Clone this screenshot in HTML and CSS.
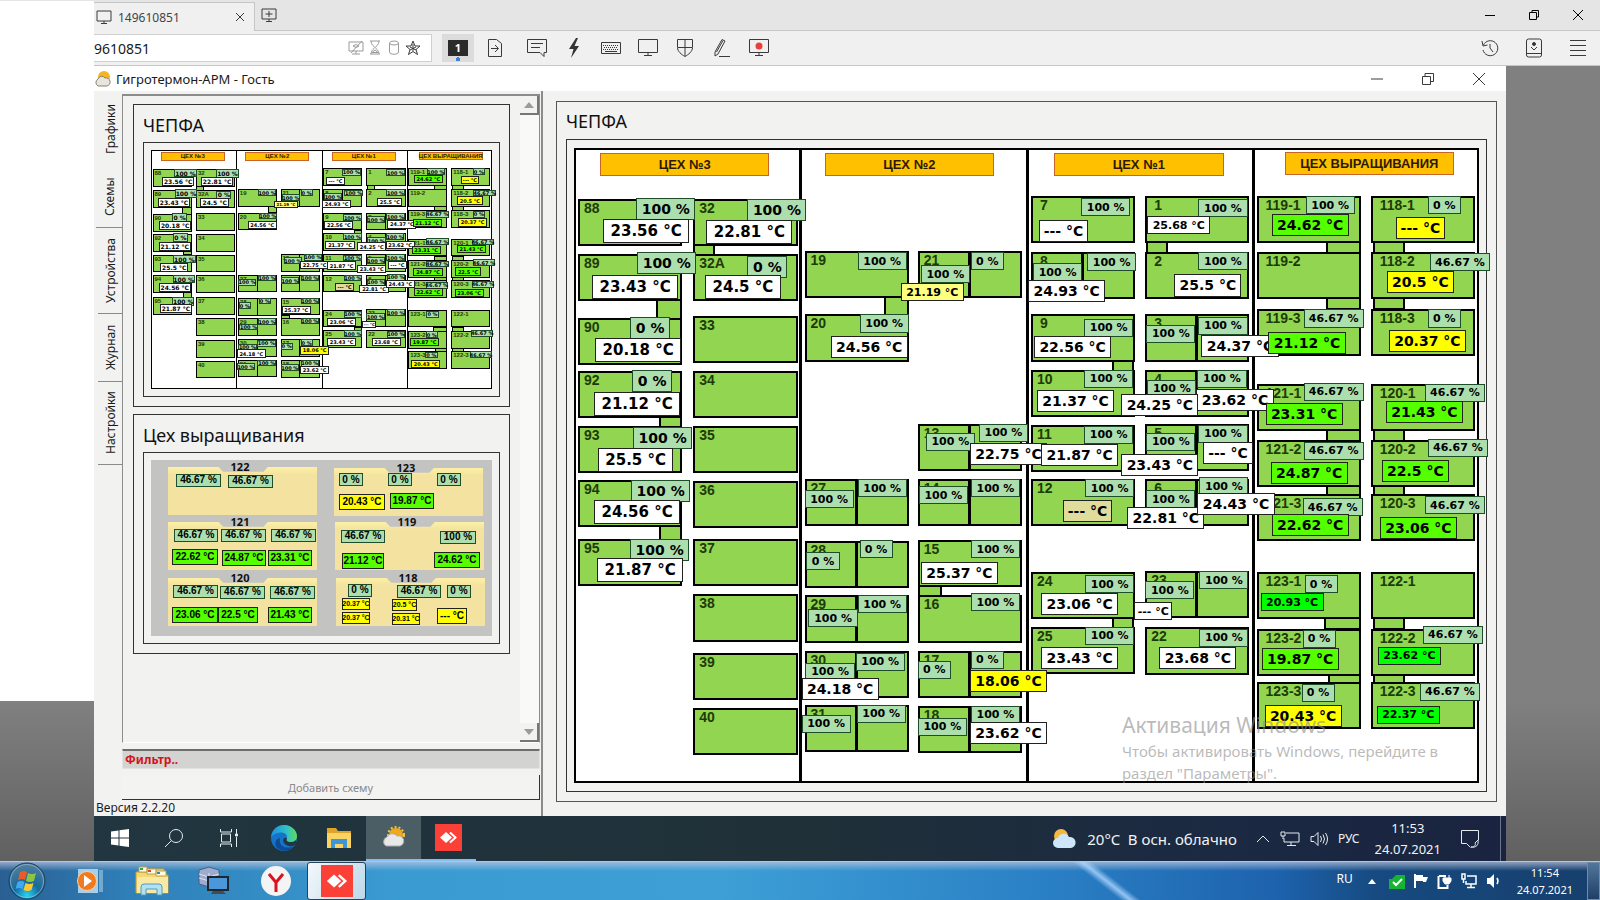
FILE: index.html
```html
<!DOCTYPE html>
<html lang="ru">
<head>
<meta charset="utf-8">
<title>149610851</title>
<link rel="stylesheet" href="styles.css">
</head>
<body>
<header class="tabstrip">
  <div class="session-tab">
    <svg class="ico" width="18" height="16" viewBox="0 0 18 16"><path d="M2 2h14v10H2zM9 12v2M6 14.500h6"/></svg>
    <span>149610851</span>
    <button class="plain" aria-label="Закрыть вкладку"><svg class="ico" width="10" height="10" viewBox="0 0 10 10"><path d="M1 1l8 8M9 1l-8 8"/></svg></button>
  </div>
  <button class="plain new-tab" aria-label="Новая вкладка"><svg class="ico" width="18" height="16" viewBox="0 0 18 16"><path d="M2 2h14v10H2zM9 12v2M6 14.500h6M9 4v6M5.500 7h7"/></svg></button>
  <div class="win-buttons">
    <button class="plain" aria-label="Свернуть"><svg class="ico dark" width="12" height="12" viewBox="0 0 12 12"><path d="M1 6.500h10"/></svg></button>
    <button class="plain" aria-label="Развернуть"><svg class="ico dark" width="12" height="12" viewBox="0 0 12 12"><path d="M1.500 3.500h7v7h-7zM4 3.500v-2h6.500v6.500h-2"/></svg></button>
    <button class="plain" aria-label="Закрыть"><svg class="ico dark" width="12" height="12" viewBox="0 0 12 12"><path d="M1 1l10 10M11 1L1 11"/></svg></button>
  </div>
</header>

<div class="toolbar">
  <div class="address">
    <input type="text" value="9610851" aria-label="Адрес">
    <svg class="ico pale" width="16" height="16" viewBox="0 0 16 16"><path d="M1 2h14v9H1zM8 11v3M4 14h8M3 13L14 1M5 6q3-3 6 0q-3 3-6 0"/></svg>
    <svg class="ico pale" width="16" height="18" viewBox="0 0 16 18"><path d="M3 2h10M3 15h10M4 2c0 4 3 5 4 6.500C9 7 12 6 12 2M4 15c0-4 3-5 4-6.500 1 1.500 4 2.500 4 6.500"/><path d="M5 13.500h6L8 11z"/></svg>
    <svg class="ico pale" width="16" height="18" viewBox="0 0 16 18"><ellipse cx="8" cy="4" rx="4.500" ry="2"/><path d="M3.500 4v9c0 3 9 3 9 0V4"/></svg>
    <svg class="ico" width="16" height="16" viewBox="0 0 16 16"><path d="M8 1l2 5h5l-4 3.500 1.500 5L8 11.500l-4.500 3 1.500-5L1 6h5zM8 4v7M5 7l6 3M11 7l-6 3"/></svg>
  </div>
  <button class="monitor-one" aria-label="Монитор 1"><span>1</span></button>
  <div class="tools">
    <button class="plain send" aria-label="Передать"><svg class="ico" width="20" height="20" viewBox="0 0 20 20"><path d="M3.500 1.500h8l5 4v13h-13zM6 10.500h7M10 7l3.500 3.500L10 14"/></svg></button>
    <button class="plain" aria-label="Чат"><svg class="ico" width="20" height="20" viewBox="0 0 20 20"><path d="M.500 1.500h19v13H17v4l-4-4H.500zM4 5.500h12M4 9.500h9"/></svg></button>
    <button class="plain" aria-label="Действия"><svg class="ico" width="20" height="20" viewBox="0 0 20 20"><path class="solid" stroke="none" d="M12 0L5 11h4.500L7 20l8-12h-4.500L14 0z"/></svg></button>
    <button class="plain" aria-label="Клавиатура"><svg class="ico" width="20" height="20" viewBox="0 0 20 20"><path d="M.500 4.500h19v11H.500zM4 13.500h12"/><path stroke-dasharray="1 1" d="M2 7.500h16M3 9.500h14M2 11.500h16"/></svg></button>
    <button class="plain" aria-label="Экран"><svg class="ico" width="20" height="20" viewBox="0 0 20 20"><path d="M.500 1.500h19v13H.500zM10 14.500v3M6 17.500h8"/></svg></button>
    <button class="plain" aria-label="Права"><svg class="ico" width="20" height="20" viewBox="0 0 20 20"><path d="M2.500 1.500h15v8c0 4-4 7-7.500 9-3.500-2-7.500-5-7.500-9zM10 2v16M3 9.500h14"/></svg></button>
    <button class="plain" aria-label="Рисование"><svg class="ico" width="20" height="20" viewBox="0 0 20 20"><path d="M3 14L10 1.500l3 1.500L6 16 3 18zM4.500 14L11 2.500M7 18.500h11"/></svg></button>
    <button class="plain" aria-label="Запись"><svg class="ico" width="20" height="20" viewBox="0 0 20 20"><path d="M.500 1.500h19v13H.500zM10 14.500v3M6 17.500h8"/><circle class="rec" cx="10" cy="8" r="3.500"/></svg></button>
  </div>
  <div class="tools-right">
    <button class="plain" aria-label="История"><svg class="ico" width="18" height="18" viewBox="0 0 18 18"><path d="M2.500 6A7.500 7.500 0 1 1 2 11M1 2l1 5 4.500-1M9 5v4l3 4"/></svg></button>
    <button class="plain" aria-label="Адресная книга"><svg class="ico" width="18" height="20" viewBox="0 0 18 20"><rect x="1.500" y="1" width="15" height="18" rx="2"/><path d="M2 15.500h14M6 9l3 3 3-3"/><circle class="solid" cx="9" cy="6" r="1.500"/></svg></button>
    <button class="plain" aria-label="Меню"><svg class="ico" width="18" height="18" viewBox="0 0 18 18"><path d="M1 1.500h16M1 6.500h16M1 11.500h16M1 16.500h16"/></svg></button>
  </div>
</div>

<main class="viewport">
  <section class="remote">
    <div class="app-title">
      <svg width="18" height="18" viewBox="0 0 18 18"><circle cx="10" cy="7" r="6" fill="#f5b51f"/><path d="M4 16a4 4 0 0 1 0-7 4 4 0 0 1 7-1 4 4 0 0 1 2 8z" fill="#e6e6e0" stroke="#8c8270"/></svg>
      <h1>Гигротермон-АРМ - Гость</h1>
      <div class="win-buttons app-buttons">
        <button class="plain" aria-label="Свернуть окно"><svg class="ico" width="12" height="12" viewBox="0 0 12 12"><path d="M0 6h12"/></svg></button>
        <button class="plain" aria-label="Восстановить окно"><svg class="ico" width="12" height="12" viewBox="0 0 12 12"><path d="M.500 3.500h8v8h-8zM3 3.500v-3h8.500v8h-3"/></svg></button>
        <button class="plain" aria-label="Закрыть окно"><svg class="ico" width="12" height="12" viewBox="0 0 12 12"><path d="M0 0l12 12M12 0L0 12"/></svg></button>
      </div>
    </div>
    <div class="app-body">
      <aside class="left">
        <div class="left-main">
          <nav class="side-tabs">
            <button class="t-graphs">Графики</button>
            <button class="t-schemes active">Схемы</button>
            <button class="t-devices">Устройства</button>
            <button class="t-journal">Журнал</button>
            <button class="t-settings">Настройки</button>
          </nav>
          <div class="left-col">
            <div class="scroll-area">
              <div class="cards">
                <article class="card">
                  <h2>ЧЕПФА</h2>
                  <div class="frame"><div class="board mini" id="board-mini"></div></div>
                </article>
                <article class="card">
                  <h2>Цех выращивания</h2>
                  <div class="frame"><div class="board folders" id="board-folders"></div></div>
                </article>
              </div>
              <div class="scrollbar">
                <button aria-label="Вверх"><svg width="10" height="6" viewBox="0 0 10 6"><path d="M0 6l5-6 5 6z" fill="#9b9b9b"/></svg></button>
                <button aria-label="Вниз"><svg width="10" height="6" viewBox="0 0 10 6"><path d="M0 0l5 6 5-6z" fill="#9b9b9b"/></svg></button>
              </div>
            </div>
            <input class="filter" type="text" placeholder="Фильтр.." aria-label="Фильтр">
            <button class="add" disabled>Добавить схему</button>
          </div>
        </div>
        <div class="version">Версия 2.2.20</div>
      </aside>
      <section class="scheme">
        <h2>ЧЕПФА</h2>
        <div class="frame"><div class="board" id="board-main"></div></div>
      </section>
      <div class="watermark"><p class="wm-title">Активация Windows</p><p>Чтобы активировать Windows, перейдите в раздел "Параметры".</p></div>
    </div>
    <footer class="bar10">
      <button aria-label="Пуск"><svg width="20" height="20" viewBox="0 0 20 20" fill="#fff"><path d="M1 3.500l7.500-1V9.500H1zM9.500 2.300L19 1v8.500H9.500zM1 10.500h7.500v7L1 16.500zM9.500 10.500H19V19l-9.500-1.300z"/></svg></button>
      <button aria-label="Поиск"><svg class="ico light" width="20" height="20" viewBox="0 0 20 20"><circle cx="12" cy="8" r="6.500"/><path d="M7.500 12.500L1 19"/></svg></button>
      <button aria-label="Представление задач"><svg class="ico light" width="20" height="20" viewBox="0 0 20 20"><path d="M1.500 1v3h11V1M1.500 19v-3h11v3M2.500 6h9v8h-9zM17.500 1v5M17.500 9v10"/><path class="solid" d="M16.500 6h2v2h-2z"/></svg></button>
      <button aria-label="Edge"><svg width="28" height="28" viewBox="0 0 28 28"><defs><linearGradient id="edge-a" x2="1" y2="0"><stop stop-color="#1f8fe0"/><stop offset=".6" stop-color="#2fc0c8"/><stop offset="1" stop-color="#5fdc5a"/></linearGradient></defs><circle cx="14" cy="14" r="13" fill="#1673c8"/><path d="M1 13C2 5 8 1 14 1c8 0 13 6 13 11 0 4-3 6-6 6-5 0-5-2-4-4 1-6-9-8-16-1z" fill="url(#edge-a)"/><path d="M10 14c-2 8 6 12 14 8-4 6-12 6-17 2-3-4-2-9 3-10z" fill="#0d4c94"/><path d="M17 14c-1 2-1 4 4 4 2 0 4-.5 5-2l1 3-4 3c-6 1-12-3-9-8z" fill="#213640"/></svg></button>
      <button aria-label="Проводник"><svg width="26" height="22" viewBox="0 0 26 22"><path d="M1 1h9l2 3h13v17H1z" fill="#e0a32a"/><path d="M1 6h24v15H1z" fill="#fbd364"/><path d="M5 21v-9h16v9h-4v-4H9v4z" fill="#3d97d6"/></svg></button>
      <button class="current" aria-label="Гигротермон"><svg width="26" height="26" viewBox="0 0 26 26"><circle cx="15" cy="10" r="7" fill="#f0a91e"/><circle cx="15" cy="10" r="8" fill="none" stroke="#f7c63d" stroke-dasharray="2 2" stroke-width="2"/><path d="M5 21a5 5 0 0 1 1-9 6 6 0 0 1 10-1 5 5 0 0 1 3 10z" fill="#e8e8e8" stroke="#aaa"/></svg></button>
      <button class="running" aria-label="AnyDesk"><svg width="27" height="27" viewBox="0 0 27 27"><path fill="#fb4137" d="M0 0h27v27H0z"/><path fill="#fff" d="M5 13.500L11 8l6 5.500-6 5.500z"/><path fill="none" stroke="#fff" stroke-width="2" d="M15 8.500l5.500 5-5.500 5"/></svg></button>
      <div class="tray10">
        <svg width="24" height="22" viewBox="0 0 24 22"><circle cx="8" cy="8" r="7" fill="#f6b73c"/><path d="M5 20a5 5 0 0 1 0-10 6 6 0 0 1 11-1 5.500 5.500 0 0 1 2 11z" fill="#cfe6fa"/></svg>
        <span class="weather">20°C&ensp;В осн. облачно</span>
        <svg class="ico light" width="14" height="10" viewBox="0 0 14 10"><path d="M1 8l6-6 6 6"/></svg>
        <svg class="ico light" width="20" height="18" viewBox="0 0 20 18"><path d="M6 3h13v9H4V8M11 12v3M7 15.500h9M1 2h4v4H1zM3 6v3"/></svg>
        <svg class="ico light" width="18" height="16" viewBox="0 0 18 16"><path d="M1 5.500h3l4-4v13l-4-4H1zM10.500 5q2 3 0 6M13 3.500q3 4.500 0 9M15.500 2q4 6 0 12"/></svg>
        <span class="lang">РУС</span>
        <time class="clock">11:53<br>24.07.2021</time>
        <svg class="ico light" width="20" height="20" viewBox="0 0 20 20"><path d="M18.500 11V1.500h-17v13h5l4 4M18 11c1 5-2 8-7 7 4 0 5-2 4-4z"/></svg>
        <i class="peek10"></i>
      </div>
    </footer>
  </section>
</main>

<footer class="bar7">
  <button class="orb" aria-label="Пуск"><svg width="38" height="38" viewBox="0 0 38 38"><defs><radialGradient id="orb-g" cx=".5" cy=".9" r=".9"><stop stop-color="#27d4f5"/><stop offset=".4" stop-color="#176a9c"/><stop offset="1" stop-color="#587f9c"/></radialGradient></defs><circle cx="19" cy="19" r="18" fill="url(#orb-g)" stroke="#16405f"/><circle cx="19" cy="19" r="16.500" fill="none" stroke="#9cc6dd" opacity=".6"/><path d="M12 10q4-2 7 0l-2 8q-3-2-7 0z" fill="#ee5a24"/><path d="M20 11q4 2 8 0l-2 8q-4 2-8 0z" fill="#8cc63f"/><path d="M9.500 20q4-2 7 0l-2 7q-3-2-7 0z" fill="#3fa9f5"/><path d="M17.500 21q4 2 8 0l-2 7q-4 2-8 0z" fill="#fcc832"/></svg></button>
  <button aria-label="Медиаплеер"><svg width="28" height="26" viewBox="0 0 28 26"><path d="M2 1h20v24H2z" fill="#a7cfe8"/><path d="M24 2v22M26 2v22" stroke="#b9dbef"/><circle cx="11" cy="13" r="9.500" fill="#f1791f" stroke="#fbd2a0"/><path d="M8 7l8 6-8 6z" fill="#fff"/></svg></button>
  <button aria-label="Проводник Windows"><svg width="34" height="30" viewBox="0 0 34 30"><path d="M1 6h12l2-3h14v6h4v18H1z" fill="#f2d974" stroke="#c59f3c"/><path d="M4 1h8v5H4zM12 3h9v5h-9zM21 5h10v5H21z" fill="#fffbe2" stroke="#b9a24a"/><path d="M5 2h3v2H5z" fill="#2ea84a"/><path d="M13 4h3v2h-3z" fill="#e0442c"/><path d="M22 6h3v2h-3z" fill="#2f83cf"/><path d="M2 11h31v16H2z" fill="#f9e9a4"/><path d="M6 29v-8q0-3 3-3h15q3 0 3 3v8h-5v-6H11v6z" fill="#b3e0f2" stroke="#4e9cbe"/></svg></button>
  <button aria-label="Серверы"><svg width="32" height="30" viewBox="0 0 32 30"><path d="M1 4l10-3 10 3v14l-10 3-10-3z" fill="#9daccd" stroke="#4d5c85"/><path d="M1 8l10 3 10-3M1 12l10 3 10-3M11 7v14" stroke="#dce3f2" fill="none"/><path d="M9 10h22v15H9z" fill="#20262e"/><path d="M11 12h18v11H11z" fill="#4b97dc"/><path d="M15 25h10l3 3H13z" fill="#434a54"/></svg></button>
  <button aria-label="Яндекс"><svg width="30" height="30" viewBox="0 0 30 30"><circle cx="15" cy="15" r="15" fill="#f4f4f4"/><path d="M8 8l7 8.500L22 8M15 16v10" fill="none" stroke="#d8121f" stroke-width="3"/></svg></button>
  <button class="open7" aria-label="AnyDesk"><svg width="32" height="32" viewBox="0 0 27 27"><path fill="#fb4137" d="M0 0h27v27H0z"/><path fill="#fff" d="M5 13.500L11 8l6 5.500-6 5.500z"/><path fill="none" stroke="#fff" stroke-width="2" d="M15 8.500l5.500 5-5.500 5"/></svg></button>
  <div class="glow"></div>
  <div class="tray7">
    <span class="lang7">RU</span>
    <svg width="8" height="5" viewBox="0 0 8 5"><path fill="#fff" d="M0 5l4-5 4 5z"/></svg>
    <svg class="first7" width="16" height="16" viewBox="0 0 16 16"><path fill="#17b332" d="M0 6h3l4-4h9v14H0z"/><path d="M4 9l3 3 6-6" fill="none" stroke="#fff" stroke-width="2"/></svg>
    <svg width="16" height="16" viewBox="0 0 16 16"><path d="M2 1v14" stroke="#fff" stroke-width="2"/><path fill="#fff" d="M3 2h7v6H3zM10 4h5l-2 5h-3z"/></svg>
    <svg width="16" height="16" viewBox="0 0 16 16"><path d="M2 3h7M1.500 3v12h9v-3" fill="none" stroke="#fff" stroke-width="2"/><path d="M6 5h8v3l-2 3H8L6 8zM8 2v3M12 2v3" fill="#fff" stroke="#fff"/></svg>
    <svg width="16" height="16" viewBox="0 0 16 16"><path d="M6 3h9v8H5V8M10 11v3M6 14.500h8M1 1h3v5H1zM2.500 6v4" fill="none" stroke="#fff" stroke-width="1.500"/></svg>
    <svg width="16" height="16" viewBox="0 0 16 16"><path fill="#fff" d="M2 5h3l4-4v14l-4-4H2z"/><path d="M12 5q2 3 0 6" fill="none" stroke="#fff" stroke-width="1.500"/></svg>
    <time class="clock7">11:54<br>24.07.2021</time>
    <i class="peek7"></i>
  </div>
</footer>
<div class="blank"></div>
<script src="scheme.js"></script>
</body>
</html>
```
FILE: styles.css
```css
* { box-sizing: border-box; }
body { margin: 0; height: 100vh; display: flex; flex-direction: column; overflow: hidden; position: relative; background: #808080; font-family: "Noto Sans", sans-serif; font-size: 12px; color: #1a1a1a; }
h1, h2, p { margin: 0; font-weight: 400; }
button, input { font-family: inherit; font-size: inherit; color: inherit; }
.plain { border: 0; background: none; padding: 0; width: 20px; display: flex; align-items: center; justify-content: center; }
svg { flex: none; display: block; }
.ico { fill: none; stroke: #3a3a3a; stroke-width: 1; }
.ico .solid { fill: #333; }
.ico .rec { fill: #e8403c; stroke: none; }
.dark { stroke: #000; }
.pale { stroke: #9a9a9a; }
.light { stroke: #e6ebee; }
.light .solid { fill: #e6ebee; }
.blank { position: absolute; left: 0; top: 1px; width: 94px; height: 700px; background: #fff; }

.tabstrip { flex: none; height: 31px; padding-left: 94px; display: flex; background: #e5e5e5; border-bottom: 1px solid #c6c6c6; }
.session-tab { width: 161px; margin: 2px 0 -1px; padding: 0 4px 0 1px; display: flex; align-items: center; gap: 5px; background: #f0f0f0; border: solid #c6c6c6; border-width: 1px 1px 0 0; color: #444; }
.session-tab .plain { margin-left: auto; }
.new-tab { margin-left: 4px; }
.win-buttons { margin-left: auto; display: flex; gap: 24px; padding-right: 12px; }
.toolbar { flex: none; height: 35px; padding-left: 94px; display: flex; align-items: center; background: #f0f0f0; border-bottom: 1px solid #c6c6c6; }
.address { width: 338px; height: 28px; display: flex; align-items: center; gap: 3px; padding-right: 10px; background: #fff; border: solid #d0d0d0; border-width: 1px 1px 1px 0; }
.address input { flex: 1; min-width: 0; border: 0; padding: 0; background: none; font-size: 14px; outline: 0; }
.monitor-one { width: 32px; height: 28px; margin-left: 10px; border: 0; padding: 0; background: radial-gradient(circle at 50% 90%, #3b82d8 0 2px, #dcdcdc 2px); display: flex; justify-content: center; align-items: center; }
.monitor-one span { width: 20px; height: 16px; line-height: 16px; background: #2b2b2b; color: #fff; font-weight: 700; font-size: 11px; }
.tools { display: flex; gap: 17px; margin-left: 11px; }
.tools .send { margin-right: 5px; }
.tools-right { margin-left: auto; display: flex; gap: 24px; padding-right: 12px; }

.viewport { flex: 1; min-height: 0; padding: 0 94px; display: flex; background: linear-gradient(#808080 80%, #606060); }
.remote { flex: 1; min-width: 0; display: flex; flex-direction: column; background: #f2f2f1; }
.app-title { flex: none; height: 25px; display: flex; align-items: center; gap: 4px; background: #fff; }
.app-title h1 { font-size: 13px; line-height: 20px; }
.app-buttons { gap: 31px; padding-right: 17px; }
.app-body { flex: 1; min-height: 0; display: flex; position: relative; }
.left { width: 449px; display: flex; flex-direction: column; border-right: 2px solid #8c8c8c; }
.left-main { flex: 1; min-height: 0; display: flex; }
.side-tabs { width: 28px; padding-top: 1px; display: flex; flex-direction: column; align-items: flex-end; }
.side-tabs button { width: 24px; padding: 0; border: 0; border-top: 1px solid #8a8a8a; background: #f2f2f1; writing-mode: vertical-rl; transform: rotate(180deg); text-align: center; }
.side-tabs .active { width: 26px; }
.t-graphs { height: 74px; }
.t-schemes { height: 62px; }
.t-devices { height: 86px; }
.t-journal { height: 68px; }
.t-settings { height: 83px; }
.side-tabs .t-graphs { border-top: 0; }
.left-col { flex: 1; min-width: 0; display: flex; flex-direction: column; gap: 6px; padding: 3px 1px 0 0; }
.scroll-area { flex: 1; min-height: 0; display: flex; gap: 10px; border: solid #8c8c8c; border-bottom-color: #fff; border-width: 2px 1px 1px; }
.cards { flex: 1; display: flex; flex-direction: column; gap: 7px; padding: 8px 0 0 10px; }
.card { border: 1px solid #333; padding: 9px; }
.card h2 { font-size: 18px; line-height: 22px; padding-bottom: 6px; color: #111; }
.frame { border: 1px solid #333; padding: 7px; display: flex; }
.scrollbar { width: 19px; display: flex; flex-direction: column; justify-content: space-between; background: #f9f9f8; }
.scrollbar button { height: 19px; padding: 0; display: flex; align-items: center; justify-content: center; background: #f2f2f1; border: solid #777; border-width: 0 2px 2px 0; }
.filter { height: 20px; padding: 0 2px; border: 1px solid #e2e2e2; border-top: 2px solid #6e6e6e; background: #d3d3d2; font-weight: 700; }
.filter::placeholder { color: #d4151b; opacity: 1; }
.add { height: 25px; border: solid #333; border-width: 0 1px 1px 0; background: #f3f3f2; color: #8a8a8a; font-size: 11px; }
.version { height: 16px; line-height: 16px; padding-left: 2px; }
.scheme { flex: 1; min-width: 0; margin: 10px 9px 14px 13px; padding: 8px 9px 9px; border: 1px solid #555; display: flex; flex-direction: column; }
.scheme h2 { font-size: 18px; line-height: 22px; padding-bottom: 7px; color: #111; }
.scheme .frame { flex: 1; padding: 8px 7px; }

.board { flex: 1; position: relative; background: #fff; box-shadow: inset 0 0 0 2px #000; font-family: "Liberation Sans", Arial, sans-serif; }
.board > * { position: absolute; white-space: nowrap; }
.divider { width: 3px; top: 0; bottom: 0; margin-left: -1px; background: #000; }
.shop { display: flex; align-items: center; justify-content: center; background: #ffc000; border: 1px solid #c8642a; font-size: 13px; font-weight: 700; color: #2c1a00; }
.cell { padding-left: 4px; background: #92d550; border: 2px solid #000; font-size: 14px; line-height: 15px; font-weight: 700; color: #1d3b08; }
.cell.wide { padding-left: 7px; }
.cell.half::after { content: ""; position: absolute; left: 48%; top: 0; bottom: 0; width: 3px; background: #000; }
.link { background: #92d550; border: 2px solid #000; }
.tag { display: flex; align-items: center; justify-content: center; font-family: "DejaVu Sans", sans-serif; font-weight: 700; color: #000; border: 1px solid #222; white-space: pre; }
.tag.l { font-size: 15px; }
.tag.m { font-size: 14px; }
.tag.s { font-size: 11px; }
.tag.hum { background: #addfae; border-color: #1e4d2a; }
.tag.l.hum { font-size: 14px; }
.tag.m.hum { font-size: 11px; }
.white { background: #fff; }
.lime { background: #55ff00; }
.green { background: #00ff00; }
.yellow { background: #ffff00; }
.cream { background: #ffff80; }
.khaki { background: #e0dc9c; }
.mini { aspect-ratio: 341 / 239; box-shadow: inset 0 0 0 1px #000; }
.mini .divider { width: 1px; margin: 0; }
.mini .shop { font-size: 6px; }
.mini .cell { font-size: 6px; line-height: 6px; border-width: 1px; padding-left: 1px; }
.mini .cell.half::after { width: 1px; }
.mini .link { border-width: 1px; }
.mini .tag.l { font-size: 6px; }
.mini .tag.m, .mini .tag.m.hum { font-size: 5px; }
.mini .tag.s { font-size: 4px; }
.folders { aspect-ratio: 341 / 176; box-shadow: none; background: #c3c3c2; }
.folder { background: linear-gradient(#fdf0a6, #f3e2a0 8px); clip-path: polygon(0 0, 34% 0, 37% 10%, 64% 10%, 67% 0, 100% 0, 100% 100%, 0 100%); }
.folder-name { font: 700 11px/12px "Noto Sans", sans-serif; color: #111; transform: translateX(-50%); }
.folders .tag, .folders .tag.hum { font: 700 10px/10px "Liberation Sans", sans-serif; }
.folders .tag.s { font-size: 7px; }
.watermark { position: absolute; right: 53px; bottom: 32px; width: 331px; color: rgba(140, 140, 140, .6); font-size: 15px; line-height: 22px; }
.watermark .wm-title { font-size: 21px; line-height: 30px; }

.bar10 { flex: none; height: 45px; display: flex; background: linear-gradient(90deg, #213640, #1f3038 50%, #1b2942 80%, #1a2440); color: #f0f3f5; }
.bar10 > button { width: 55px; border: 0; padding: 0 0 2px; background: none; display: flex; align-items: center; justify-content: center; }
.bar10 > button:first-child { width: 52px; }
.bar10 .current { background: #4b5e66; box-shadow: inset 0 -2px #86bdf0; }
.bar10 .running { box-shadow: inset 0 -2px #86bdf0; }
.tray10 { margin-left: auto; display: flex; align-items: center; gap: 10px; }
.weather { font-size: 15px; margin-right: 9px; }
.lang { margin-right: 5px; }
.clock { text-align: center; font-size: 13px; line-height: 21px; }
.tray10 .clock + svg { margin: 0 10px 0 9px; }
.peek10 { align-self: stretch; width: 6px; border-left: 1px solid #69758a; }
.bar7 { flex: none; height: 39px; display: flex; align-items: center; color: #fff; border-top: 1px solid #b8c6d4; background: linear-gradient(rgba(190, 200, 225, .7), rgba(190, 200, 225, 0) 9px), linear-gradient(90deg, #2a5f92, #2f7fb8 8%, #3a9bd2 25%, #3d9fd6 45%, #2a7fc4 66%, #1d62ac 80%, #164a80 86%, #163f6c); }
.bar7 > button { width: 62px; height: 38px; padding: 0; border: 0; background: none; display: flex; align-items: center; justify-content: center; }
.bar7 .orb { width: 54px; margin-right: 5px; }
.bar7 .open7 { width: 59px; background: linear-gradient(120deg, #f4f8fb, #bcd8ea); border: 1px solid #24425c; border-radius: 3px; }
.glow { flex: 1; align-self: stretch; background: linear-gradient(38deg, transparent 74%, rgba(175, 215, 255, .8) 75%, transparent 76%); }
.tray7 { display: flex; align-items: center; gap: 8px; align-self: stretch; }
.lang7 { margin-right: 7px; padding-bottom: 6px; }
.tray7 .first7 { margin-left: 5px; }
.clock7 { margin-left: 8px; text-align: center; font-size: 11px; line-height: 17px; }
.peek7 { align-self: stretch; width: 13px; margin-left: 6px; border: 1px solid #6f8dab; background: linear-gradient(#52779c, #1e3f66); }
```
FILE: scheme.js
```javascript
// Plan of the farm: coordinates are in units of a 903 x 633 drawing.
const dividers = [225, 452, 678];
const shops = [[26, 5, "ЦЕХ №3"], [250, 5, "ЦЕХ №2"], [479, 5, "ЦЕХ №1"], [709, 4, "ЦЕХ ВЫРАЩИВАНИЯ"]];

// column x, then label:y pairs; "/" marks a cell with a partition
const columns = [
  [4, "88:51 89:106 90:169 92:222 93:277 94:331 95:390"],
  [119, "32:51 32А:106 33:167 34:222 35:277 36:332 37:390 38:445 39:503 40:558"],
  [230, "19:103 20:166 27:330/ 28:392/ 29:446/ 30:501/ 31:555/"],
  [343, "21:103/ 13:275/ 14:330/ 15:391 16:446 17:501/ 18:556/"],
  [456, "7:48 8:104/ 9:166 10:221 11:276 12:330 24:423 25:477"],
  [570, "1:48 2:104 3:166/ 4:221/ 5:275/ 6:330/ 23:422/ 22:478"],
  [681, "119-1:48 119-2:104 119-3:160 121-1:235 121-2:291 121-3:345 123-1:423 123-2:479 123-3:532"],
  [795, "118-1:48 118-2:104 118-3:160 120-1:235 120-2:291 120-3:345 122-1:423 122-2:479 122-3:532"]
];
const links = [
  [82, 151, 26, 20], [85, 267, 23, 12], [85, 376, 23, 16], [119, 96, 22, 12], [309, 148, 25, 20], [343, 436, 24, 12],
  [571, 93, 22, 13], [537, 211, 22, 12], [537, 468, 22, 11],
  [750, 93, 35, 13], [750, 149, 35, 13], [750, 280, 35, 13], [750, 336, 35, 11], [748, 468, 37, 13], [752, 524, 33, 10],
  [797, 93, 32, 13], [797, 149, 32, 13], [797, 280, 32, 13], [797, 336, 32, 11], [797, 468, 32, 13], [797, 524, 32, 10]
];

// x, y, value, size, colour (humidity when omitted), "main" = absent from the thumbnail
const tags = [
  [62, 50, "100", "l"], [173, 51, "100", "l"], [29, 71, "23.56", "l", "white"], [132, 72, "22.81", "l", "white"],
  [63, 104, "100", "l"], [173, 108, "0", "l"], [18, 127, "23.43", "l", "white"], [131, 127, "24.5", "l", "white"],
  [56, 168, "0", "l"], [21, 189, "20.18", "l", "white"], [58, 221, "0", "l"], [20, 243, "21.12", "l", "white"],
  [59, 278, "100", "l"], [24, 299, "25.5", "l", "white"], [57, 331, "100", "l"], [20, 351, "24.56", "l", "white"],
  [56, 390, "100", "l"], [23, 409, "21.87", "l", "white"],
  [283, 104, "100", "m"], [396, 104, "0", "m"], [346, 117, "100", "m"], [326, 135, "21.19", "s", "cream"],
  [285, 166, "100", "m"], [256, 187, "24.56", "m", "white"],
  [351, 284, "100", "m"], [404, 275, "100", "m"], [395, 294, "22.75", "m", "white"],
  [230, 341, "100", "m"], [283, 330, "100", "m"], [344, 337, "100", "m"], [396, 330, "100", "m"],
  [232, 403, "0", "m"], [285, 391, "0", "m"], [396, 391, "100", "m"], [346, 413, "25.37", "m", "white"],
  [234, 460, "100", "m"], [283, 446, "100", "m"], [396, 444, "100", "m"],
  [231, 513, "100", "m"], [281, 503, "100", "m"], [227, 528, "24.18", "m", "white"],
  [343, 511, "0", "m"], [396, 501, "0", "m"], [395, 520, "18.06", "m", "yellow"],
  [227, 565, "100", "m"], [282, 555, "100", "m"], [343, 568, "100", "m"], [396, 556, "100", "m"], [395, 572, "23.62", "m", "white"],
  [506, 50, "100", "m"], [464, 72, "---", "m", "white"], [623, 51, "100", "m"], [572, 68, "25.68", "s", "white", "main"],
  [458, 115, "100", "m"], [512, 105, "100", "m"], [453, 132, "24.93", "m", "white"],
  [623, 104, "100", "m"], [599, 126, "25.5", "m", "white"],
  [509, 170, "100", "m"], [459, 187, "22.56", "m", "white"],
  [571, 176, "100", "m"], [623, 168, "100", "m"], [626, 186, "24.37", "m", "white"],
  [509, 221, "100", "m"], [462, 241, "21.37", "m", "white"],
  [572, 231, "100", "m"], [622, 221, "100", "m"], [621, 240, "23.62", "m", "white"], [546, 245, "24.25", "m", "white"],
  [509, 277, "100", "m"], [466, 295, "21.87", "m", "white"],
  [571, 284, "100", "m"], [623, 276, "100", "m"], [546, 305, "23.43", "m", "white"], [628, 293, "---", "m", "white"],
  [510, 330, "100", "m"], [488, 351, "---", "m", "khaki"],
  [571, 341, "100", "m"], [624, 328, "100", "m"], [552, 358, "22.81", "m", "white"], [622, 344, "24.43", "m", "white"],
  [510, 426, "100", "m"], [466, 444, "23.06", "m", "white"],
  [570, 432, "100", "m"], [624, 422, "100", "m"], [559, 453, "---", "s", "white"],
  [510, 477, "100", "m"], [466, 497, "23.43", "m", "white"], [624, 479, "100", "m"], [584, 497, "23.68", "m", "white"],
  [730, 48, "100", "m"], [696, 66, "24.62", "m", "lime"], [852, 48, "0", "m"], [820, 69, "---", "m", "yellow"],
  [854, 105, "46.67", "m"], [811, 123, "20.5", "m", "yellow"],
  [728, 161, "46.67", "m"], [693, 183, "21.12", "m", "lime"], [852, 161, "0", "m"], [813, 181, "20.37", "m", "yellow"],
  [728, 234, "46.67", "m"], [690, 254, "23.31", "m", "lime"], [849, 235, "46.67", "m"], [810, 252, "21.43", "m", "lime"],
  [728, 293, "46.67", "m"], [695, 313, "24.87", "m", "lime"], [852, 290, "46.67", "m"], [806, 311, "22.5", "m", "lime"],
  [727, 349, "46.67", "m"], [696, 365, "22.62", "m", "lime"], [849, 347, "46.67", "m"], [804, 368, "23.06", "m", "lime"],
  [729, 426, "0", "m"], [685, 444, "20.93", "s", "green", "main"],
  [727, 480, "0", "m"], [686, 498, "19.87", "m", "lime"], [847, 476, "46.67", "m"], [802, 497, "23.62", "s", "green", "main"],
  [726, 534, "0", "m"], [689, 555, "20.43", "m", "yellow"], [844, 533, "46.67", "m"], [801, 556, "22.37", "s", "green", "main"]
];
const humidityWidth = { l: { "100": 59, "0": 40 }, m: { "100": 49, "0": 33, "46.67": 60 } };
const tempWidth = { l: { 5: 86, 4: 75 }, m: { 5: 77, 4: 67, 3: 49 }, s: { 5: 63, 3: 38 } };

function add(board, size, cls, x, y, w, h, text) {
  const el = document.createElement("div");
  el.className = cls;
  el.style.left = (x / size[0] * 100).toFixed(2) + "%";
  if (y !== null) el.style.top = (y / size[1] * 100).toFixed(2) + "%";
  if (w) el.style.width = (w / size[0] * 100).toFixed(2) + "%";
  if (h) el.style.height = (h / size[1] * 100).toFixed(2) + "%";
  if (text) el.textContent = text;
  board.append(el);
}

function drawFarm(board, isMini) {
  const size = [903, 633];
  dividers.forEach(x => add(board, size, "divider", x, null));
  shops.forEach(([x, y, name]) => add(board, size, "shop", x, y, 169, 23, name));
  links.forEach(l => add(board, size, "link", ...l));
  columns.forEach(([x, list]) => list.split(" ").forEach(item => {
    const [, name, y, half] = item.match(/^(.+):(\d+)(\/?)$/);
    const wide = name.length === 1 || name.length > 3 ? " wide" : "";
    add(board, size, "cell" + (half ? " half" : "") + wide, x, +y, 104, 47, name);
  }));
  tags.forEach(([x, y, value, s, colour, only]) => {
    if (only && isMini) return;
    const w = colour ? tempWidth[s][value.length] : humidityWidth[s][value];
    const h = colour ? { l: 24, m: 22, s: 18 }[s] : { l: 22, m: 18 }[s];
    add(board, size, `tag ${s} ${colour || "hum"}`, x, y, w, h, value + (colour ? " °C" : " %"));
  });
}

// Growing shop: units of a 341 x 176 drawing.
const folders = [[17, 7, "122"], [183, 8, "123"], [17, 62, "121"], [184, 62, "119"], [17, 118, "120"], [185, 118, "118"]];
const folderTags = [
  [25, 14, 45, "46.67"], [77, 15, 45, "46.67"], [188, 13, 24, "0"], [237, 13, 24, "0"], [286, 13, 24, "0"],
  [188, 34, 46, "20.43", "yellow"], [239, 33, 44, "19.87", "lime"],
  [23, 69, 44, "46.67"], [70, 69, 45, "46.67"], [120, 69, 45, "46.67"],
  [21, 89, 46, "22.62", "lime"], [71, 90, 44, "24.87", "lime"], [117, 90, 44, "23.31", "lime"],
  [190, 70, 44, "46.67"], [289, 71, 36, "100"], [191, 93, 42, "21.12", "lime"], [283, 92, 46, "24.62", "lime"],
  [22, 125, 45, "46.67"], [69, 126, 45, "46.67"], [119, 126, 45, "46.67"],
  [21, 147, 46, "23.06", "lime"], [67, 147, 40, "22.5", "lime"], [117, 147, 44, "21.43", "lime"],
  [197, 124, 24, "0"], [246, 125, 44, "46.67"], [296, 125, 24, "0"],
  [191, 138, 28, "20.37", "yellow", "s"], [241, 139, 25, "20.5", "yellow", "s"],
  [191, 152, 28, "20.37", "yellow", "s"], [241, 153, 28, "20.31", "yellow", "s"], [286, 148, 30, "---", "yellow"]
];

function drawFolders(board) {
  const size = [341, 176];
  folders.forEach(([x, y, name]) => {
    add(board, size, "folder", x, y, 149, 48);
    add(board, size, "folder-name", x + 72, y - 6, 0, 0, name);
  });
  folderTags.forEach(([x, y, w, value, colour, small]) =>
    add(board, size, `tag ${small || ""} ${colour || "hum"}`, x, y, w, small ? 12 : colour ? 16 : 13, value + (colour ? " °C" : " %")));
}

drawFarm(document.getElementById("board-main"), false);
drawFarm(document.getElementById("board-mini"), true);
drawFolders(document.getElementById("board-folders"));
```
